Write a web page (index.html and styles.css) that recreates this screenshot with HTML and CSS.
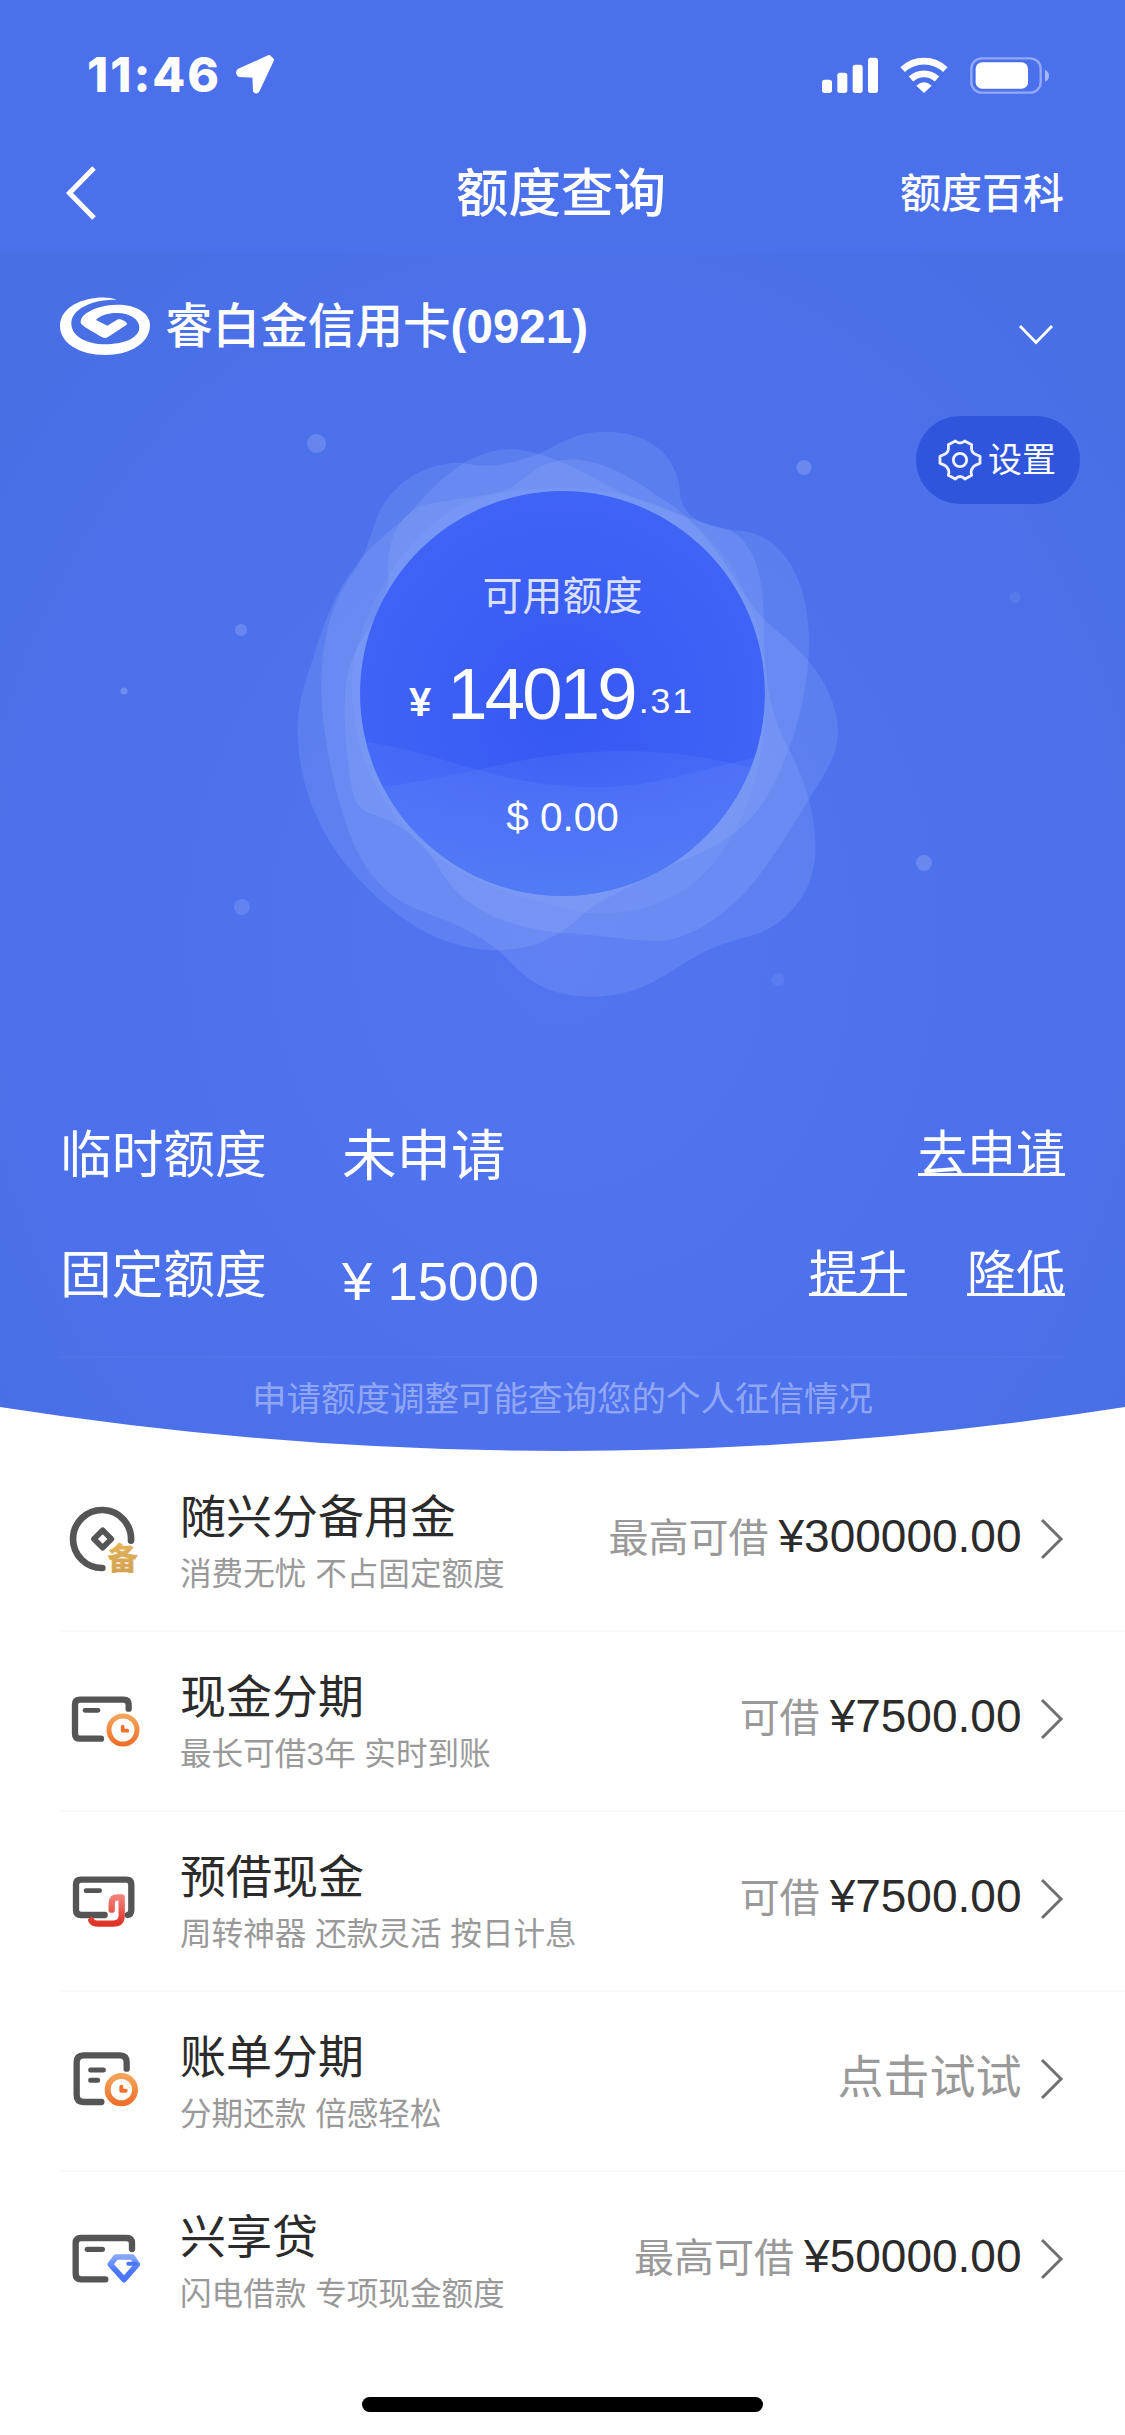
FILE: index.html
```html
<!DOCTYPE html>
<html lang="zh-CN">
<head>
<meta charset="utf-8">
<title>额度查询</title>
<link rel="stylesheet" href="styles.css">
</head>
<body>
<div class="page">
  <header class="top">
    <div class="status">
      <div class="status-left">
        <span class="time">11:46</span>
        <svg class="loc" width="40" height="40" viewBox="0 0 120 120"><path d="M12 47 L102 6 L111 15 L68 106 Q66 111 60 108 L58 62 L13 60 Q6 54 12 47Z" fill="#fff" stroke="#fff" stroke-width="12" stroke-linejoin="round"/></svg>
      </div>
      <div class="status-right">
        <svg width="56" height="36" viewBox="0 0 168 108" fill="#fff"><rect x="0" y="68" width="30" height="40" rx="8"/><rect x="46" y="47" width="30" height="61" rx="8"/><rect x="92" y="23" width="30" height="85" rx="8"/><rect x="138" y="2" width="30" height="106" rx="8"/></svg>
        <svg class="wifi" width="48" height="36" viewBox="0 0 144 108" fill="none" stroke="#fff"><path d="M8 38 A93 93 0 0 1 136 38" stroke-width="20"/><path d="M33 66 A57 57 0 0 1 111 66" stroke-width="20"/><path d="M49 86 Q72 66 95 86 L72 108Z" fill="#fff" stroke="none"/></svg>
        <svg class="battery" width="79" height="37" viewBox="0 0 237 111"><rect x="4" y="4" width="208" height="103" rx="31" fill="none" stroke="#fff" stroke-opacity=".4" stroke-width="7"/><rect x="17" y="16" width="157" height="79" rx="19" fill="#fff"/><path d="M225 38 Q237 44 237 56 Q237 68 225 74Z" fill="#fff" fill-opacity=".5"/></svg>
      </div>
    </div>
    <nav class="nav">
      <svg class="back" width="32" height="54" viewBox="0 0 32 54"><path d="M29 2 L4.500 27 L29 52" fill="none" stroke="#fff" stroke-width="5"/></svg>
      <h1 class="nav-title">额度查询</h1>
      <a class="nav-link">额度百科</a>
    </nav>
  </header>

  <section class="hero">
    <div class="card">
      <svg class="logo" width="90" height="58" viewBox="30 51 270 174"><path fill="#fff" d="M200 59 C150 40 30 62 30 138 C30 190 90 225 165 225 C240 225 300 190 300 135 C300 95 250 73 200 74 C140 76 92 100 92 126 C92 134 100 139 157 172 Q166 176 174 171 L230 134 C236 128 214 115 204 118 L172 137 L138 120 C150 106 175 99 200 99 C240 99 268 118 268 142 C268 175 220 193 165 193 C110 193 64 170 64 130 C64 90 120 58 200 59Z"/></svg>
      <span class="card-name">睿白金信用卡<b>(0921)</b></span>
      <svg class="card-arrow" width="36" height="22" viewBox="0 0 36 22"><path d="M2 2 L18 18.500 L34 2" fill="none" stroke="#fff" stroke-width="2.800"/></svg>
    </div>

    <div class="stage">
      <svg class="stage-art" width="1125" height="640" viewBox="0 0 1125 640">
        <defs>
          <radialGradient id="ball" gradientUnits="userSpaceOnUse" cx="760" cy="760" r="560"><stop offset="0" stop-color="#3658f3"/><stop offset="1" stop-color="#4064f6"/></radialGradient>
          <linearGradient id="wave" gradientUnits="userSpaceOnUse" x1="0" y1="840" x2="0" y2="1215"><stop offset="0" stop-color="#6c8cff" stop-opacity=".17"/><stop offset="1" stop-color="#6494f4" stop-opacity=".3"/></linearGradient>
          <clipPath id="disc"><ellipse cx="765" cy="719" rx="512" ry="496"/></clipPath>
        </defs>
        <g fill="#fff">
          <circle cx="316.500" cy="43.500" r="9.500" fill-opacity=".15"/>
          <circle cx="804" cy="67.500" r="7.500" fill-opacity=".17"/>
          <circle cx="241" cy="230" r="6" fill-opacity=".16"/>
          <circle cx="124" cy="291" r="3.500" fill-opacity=".2"/>
          <circle cx="1015" cy="197.500" r="5.500" fill-opacity=".07"/>
          <circle cx="924" cy="463" r="8" fill-opacity=".16"/>
          <circle cx="242" cy="507" r="8" fill-opacity=".12"/>
          <circle cx="778" cy="579.500" r="6.500" fill-opacity=".07"/>
        </g>
        <svg x="260" y="0" width="620" height="640" viewBox="0 0 1568 1568" preserveAspectRatio="none">
          <g fill="#a9c3ff" fill-opacity=".155">
            <path d="M870 78 C790 80 745 115 705 132 C650 152 600 164 550 160 C520 157 505 150 470 157 C390 168 330 220 303 272 C280 320 275 370 235 425 C170 510 155 610 155 710 C157 800 175 900 205 1000 C240 1120 290 1200 390 1245 C480 1278 540 1300 605 1350 C660 1400 700 1462 845 1462 C960 1460 1020 1410 1090 1370 C1150 1335 1200 1325 1265 1306 C1350 1270 1405 1190 1405 1100 C1405 1000 1370 915 1335 850 C1290 770 1275 680 1275 560 C1275 440 1255 360 1195 322 C1150 305 1080 310 1063 235 C1058 130 980 78 870 78Z"/>
            <path d="M632 120 C570 124 530 142 490 172 C440 205 410 245 370 285 C320 330 275 360 240 410 C190 470 160 550 135 630 C105 710 95 760 95 810 C98 950 150 1050 210 1130 C300 1235 430 1348 600 1348 C720 1345 770 1300 830 1250 C870 1220 930 1195 1020 1150 C1130 1100 1210 1080 1280 975 C1350 860 1387 720 1389 590 C1386 450 1330 322 1200 320 C1100 300 1010 260 940 238 C850 200 740 122 632 120Z"/>
            <path d="M785 146 C700 150 680 190 630 218 C560 242 470 240 400 262 C330 300 318 380 326 440 C310 520 275 550 240 620 C205 680 212 800 222 880 C236 1010 250 1000 310 1025 C380 1050 430 1110 455 1150 C520 1260 650 1295 760 1306 C860 1310 940 1326 1010 1325 C1100 1320 1190 1250 1250 1180 C1320 1095 1360 1020 1400 960 C1440 900 1462 860 1462 810 C1458 700 1370 610 1300 560 C1240 515 1200 430 1150 365 C1100 300 1060 265 1000 232 C940 190 870 148 785 146Z"/>
            <path fill-opacity=".09" d="M520 250 C370 320 230 540 232 700 C235 860 290 950 350 1030 C430 1130 560 1190 650 1215 C740 1235 800 1262 880 1258 C1050 1250 1150 1160 1210 1040 C1270 920 1290 780 1270 620 C1240 440 1160 340 1060 280 C940 215 700 190 520 250Z"/>
          </g>
          <ellipse cx="765" cy="719" rx="512" ry="496" fill="url(#ball)"/>
          <g clip-path="url(#disc)" fill="url(#wave)">
            <path d="M240 834 C370 850 460 882 550 906 C660 936 740 948 850 949 C1000 948 1110 905 1290 868 V1230 H240Z"/>
            <path d="M240 955 C400 940 480 918 570 902 C690 876 790 860 930 860 C1050 860 1150 880 1290 910 V1230 H240Z"/>
          </g>
        </svg>
      </svg>
      <div class="amounts">
        <div class="amounts-label">可用额度</div>
        <div class="amounts-cny"><span class="yen">¥</span><span class="whole">14019</span><span class="cents">.31</span></div>
        <div class="amounts-usd">$ 0.00</div>
      </div>
      <a class="settings">
        <svg width="44" height="42" viewBox="0 0 132 126" fill="none" stroke="#eef2ff" stroke-width="8.500" stroke-linejoin="round"><path d="M52 6 Q66 18 80 6 L101 17 Q98 38 109 44 L126 52 V73 Q107 79 103 88 Q97 95 101 109 L81 120 Q66 105 52 120 L31 109 Q35 95 29 88 Q25 79 6 73 V52 L23 44 Q34 38 31 17Z"/><circle cx="66" cy="63" r="20"/></svg>
        <span>设置</span>
      </a>
    </div>

    <div class="limits">
      <div class="limit">
        <span class="limit-name">临时额度</span>
        <span class="limit-value">未申请</span>
        <span class="limit-links"><a>去申请</a></span>
      </div>
      <div class="limit">
        <span class="limit-name">固定额度</span>
        <span class="limit-value limit-value-num">¥ 15000</span>
        <span class="limit-links"><a>提升</a><a>降低</a></span>
      </div>
      <p class="notice">申请额度调整可能查询您的个人征信情况</p>
    </div>
    <svg class="curve" width="1125" height="46" viewBox="0 0 1125 46"><path d="M0 1 Q562.500 89 1125 1 V46 H0Z" fill="#fff"/></svg>
  </section>

  <main class="list">
    <svg width="0" height="0" class="defs">
      <defs>
        <linearGradient id="gold" x1="0" y1="0" x2="0" y2="1"><stop offset="0" stop-color="#e9b75c"/><stop offset="1" stop-color="#cf9f4e"/></linearGradient>
        <linearGradient id="orange" x1="0" y1="0" x2="0" y2="1"><stop offset="0" stop-color="#f3a45a"/><stop offset="1" stop-color="#f0702a"/></linearGradient>
        <linearGradient id="red" x1="0" y1="0" x2="0" y2="1"><stop offset="0" stop-color="#f08078"/><stop offset="1" stop-color="#e03228"/></linearGradient>
        <linearGradient id="blue" x1="0" y1="0" x2="0" y2="1"><stop offset="0" stop-color="#86a6fa"/><stop offset=".6" stop-color="#4a76fb"/></linearGradient>
      </defs>
    </svg>
    <div class="row">
      <svg class="row-icon" viewBox="0 0 240 240"><g class="ink"><path d="M213 119 A87 87 0 1 0 127 201" stroke-width="20"/><path d="M128 88 L154 114 L128 140 L102 114Z" stroke-width="17"/></g><text x="143" y="203" class="bei">备</text></svg>
      <div class="row-text"><div class="row-title">随兴分备用金</div><div class="row-sub">消费无忧 不占固定额度</div></div>
      <div class="row-side"><span class="hint">最高可借</span><span class="sum">¥300000.00</span></div>
      <svg class="go" viewBox="0 0 24 42"><path d="M2 2 L21 21 L2 40"/></svg>
    </div>
    <div class="row">
      <svg class="row-icon" viewBox="0 0 240 240"><g class="ink"><path d="M123 173 H60 Q45 173 45 158 V71 Q45 56 60 56 H191 Q206 56 206 71 V83" stroke-width="19"/><path d="M75 88 H114" stroke-width="14"/></g><g class="clock"><circle cx="189" cy="147" r="42" stroke-width="15"/><path d="M188 137 V149 H202" stroke-width="11"/></g></svg>
      <div class="row-text"><div class="row-title">现金分期</div><div class="row-sub">最长可借3年 实时到账</div></div>
      <div class="row-side"><span class="hint">可借</span><span class="sum">¥7500.00</span></div>
      <svg class="go" viewBox="0 0 24 42"><path d="M2 2 L21 21 L2 40"/></svg>
    </div>
    <div class="row">
      <svg class="row-icon" viewBox="0 0 240 240"><g class="ink"><path d="M134 162 H63 Q48 162 48 147 V71 Q48 56 63 56 H199 Q214 56 214 71 V147 Q214 160 203 162" stroke-width="19"/><path d="M78 89 H119" stroke-width="14"/></g><path class="hook" d="M155 146 V127 Q155 109 173 109 H185 V163 Q185 188 160 188 H116 Q98 188 94 178"/></svg>
      <div class="row-text"><div class="row-title">预借现金</div><div class="row-sub">周转神器 还款灵活 按日计息</div></div>
      <div class="row-side"><span class="hint">可借</span><span class="sum">¥7500.00</span></div>
      <svg class="go" viewBox="0 0 24 42"><path d="M2 2 L21 21 L2 40"/></svg>
    </div>
    <div class="row">
      <svg class="row-icon" viewBox="0 0 240 240"><g class="ink"><path d="M124 183 H71 Q50 183 50 162 V64 Q50 43 71 43 H180 Q200 43 200 64 V83" stroke-width="19"/><path d="M92 87 H130 M92 118 H113" stroke-width="15"/></g><g class="clock"><circle cx="184" cy="146" r="41" stroke-width="18"/><path d="M184 137 V149 H197" stroke-width="12"/></g></svg>
      <div class="row-text"><div class="row-title">账单分期</div><div class="row-sub">分期还款 倍感轻松</div></div>
      <div class="row-side"><span class="hint hint-big">点击试试</span></div>
      <svg class="go" viewBox="0 0 24 42"><path d="M2 2 L21 21 L2 40"/></svg>
    </div>
    <div class="row row-last">
      <svg class="row-icon" viewBox="0 0 240 240"><g class="ink"><path d="M136 175 H63 Q47 175 47 159 V67 Q47 51 63 51 H200 Q216 51 216 67 V84" stroke-width="19"/><path d="M82 85 H127" stroke-width="16"/></g><g class="gem"><path d="M168 108 H217 L232 130 L192 176 L151 130Z" stroke-width="17"/><path d="M205 128 H228" stroke-width="12" class="gem-mark"/></g></svg>
      <div class="row-text"><div class="row-title">兴享贷</div><div class="row-sub">闪电借款 专项现金额度</div></div>
      <div class="row-side"><span class="hint">最高可借</span><span class="sum">¥50000.00</span></div>
      <svg class="go" viewBox="0 0 24 42"><path d="M2 2 L21 21 L2 40"/></svg>
    </div>
  </main>
  <div class="home-bar"></div>
</div>
</body>
</html>
```
FILE: styles.css
```css
* { box-sizing: border-box; margin: 0; padding: 0; }

body {
  width: 1125px;
  background: #fff;
  font-family: "Liberation Sans", "Noto Sans CJK SC", sans-serif;
}

svg { display: block; flex: none; }

.page {
  width: 1125px;
  height: 2435px;
  display: flex;
  flex-direction: column;
  overflow: hidden;
}

/* status bar and navigation */
.top { background: #4b70eb; color: #fff; height: 252px; }

.status {
  height: 134px;
  padding: 16px 76px 0 87px;
  display: flex;
  align-items: center;
  justify-content: space-between;
}
.status-left, .status-right { display: flex; align-items: center; }
.status-left { gap: 14px; }
.time { font: 800 48px/60px Inter, sans-serif; letter-spacing: 2px; }
.wifi { margin-left: 22px; }
.battery { margin-left: 22px; }

.nav {
  height: 118px;
  padding: 0 61px 0 65px;
  display: grid;
  grid-template-columns: 1fr auto 1fr;
  align-items: center;
}
.nav-title { padding-top: 2px; margin: 0 2px 0 -5px; font-size: 52.500px; line-height: 70px; font-weight: 500; }
.nav-link { padding-top: 1px; justify-self: end; font-size: 41px; line-height: 60px; font-weight: 500; }

/* blue area */
.hero {
  position: relative;
  height: 1200px;
  flex: none;
  color: #fff;
  background: radial-gradient(760px 900px at 562px 690px, #5274f1 0%, #4d71ed 55%, #486fe4 100%);
}
.card {
  height: 148px;
  padding: 0 71px 0 60px;
  display: flex;
  align-items: center;
}
.card-name { margin-left: 15px; padding-top: 2px; font-size: 47.600px; line-height: 60px; font-weight: 500; }
.card-name b { font-weight: 700; }
.card-arrow { margin: 17px 0 0 auto; }

.stage { position: relative; height: 640px; display: grid; }
.stage-art, .amounts { grid-area: 1 / 1; }
.amounts {
  padding-top: 169px;
  display: flex;
  flex-direction: column;
  align-items: center;
}
.amounts-label { font-size: 40px; line-height: 54px; color: rgba(255, 255, 255, .82); }
.amounts-cny {
  height: 86px;
  margin-top: 28px;
  padding-right: 22px;
  font-size: 72px;
  line-height: 86px;
  white-space: nowrap;
}
.yen { font-size: 40px; font-weight: 700; line-height: 1; vertical-align: 3px; }
.whole { margin-left: 16px; font-size: 72.500px; letter-spacing: -2.800px; }
.cents { margin-left: 4px; font-size: 35.500px; letter-spacing: 2px; line-height: 1; vertical-align: 6px; }
.amounts-usd { margin-top: 53px; font-size: 40.500px; line-height: 54px; }

.settings {
  position: absolute;
  top: 16px;
  right: 45px;
  width: 164px;
  height: 88px;
  padding-left: 22px;
  display: flex;
  align-items: center;
  gap: 6px;
  border-radius: 44px;
  background: #2f55dc;
  font-size: 34px;
  line-height: 44px;
}

.limits { padding: 54px 60px 0; }
.limit {
  height: 120px;
  display: grid;
  grid-template-columns: 282px 1fr auto;
  align-items: center;
}
.limit-name { padding-top: 1px; font-size: 51.700px; line-height: 70px; }
.limit-value { padding-top: 5px; font-size: 54.500px; line-height: 70px; }
.limit-value-num { padding-top: 16px; }
.limit-links { display: flex; gap: 60px; font-size: 49px; line-height: 66px; }
.limit-links a {
  text-decoration: underline;
  text-decoration-thickness: 3px;
  text-decoration-skip-ink: none;
  text-underline-offset: 2px;
}
.notice {
  margin-top: 22px;
  padding-top: 17px;
  border-top: 2px solid rgba(255, 255, 255, .03);
  text-align: center;
  font-size: 34.500px;
  line-height: 48px;
  color: rgba(255, 255, 255, .4);
}
.curve { position: absolute; left: 0; bottom: 0; }

/* product list */
.list { height: 900px; flex: none; background: #fff; padding-left: 60px; }
.defs { position: absolute; }
.row {
  height: 180px;
  padding-right: 61px;
  display: flex;
  align-items: center;
  border-bottom: 2px solid #f9f9f9;
}
.row-last { border-bottom-color: transparent; }
.row-icon { width: 80px; height: 80px; }
.ink path { fill: none; stroke: #555; stroke-linecap: round; stroke-linejoin: round; }
.bei { font: 700 90px "Noto Sans CJK SC", sans-serif; fill: url(#gold); stroke: url(#gold); stroke-width: 2; }
.clock { fill: none; stroke: url(#orange); stroke-linecap: round; stroke-linejoin: round; }
.clock path { stroke: #f0702a; }
.hook { fill: none; stroke: url(#red); stroke-width: 19; stroke-linecap: round; stroke-linejoin: round; }
.gem { fill: none; stroke: url(#blue); stroke-linejoin: round; stroke-linecap: round; }
.gem .gem-mark { stroke: #4a76fb; }

.row-text { margin-left: 40px; padding-top: 1px; flex: 1; }
.row-title { font-size: 46px; line-height: 60px; color: #2b2b2b; }
.row-sub { font-size: 31.600px; line-height: 44px; margin-top: 5px; color: #999; }
.row-side {
  margin-bottom: 8px;
  display: flex;
  align-items: baseline;
  gap: 10px;
  line-height: 60px;
}
.hint { font-size: 40px; color: #999; }
.hint-big { font-size: 46px; }
.sum { font-size: 46px; color: #2b2b2b; }
.go { width: 24px; height: 42px; margin: 0 0 5px 18.500px; fill: none; stroke: #707070; stroke-width: 3; }

.home-bar {
  width: 401px;
  height: 15px;
  margin: 45px auto 0;
  border-radius: 8px;
  background: #000;
}
```
